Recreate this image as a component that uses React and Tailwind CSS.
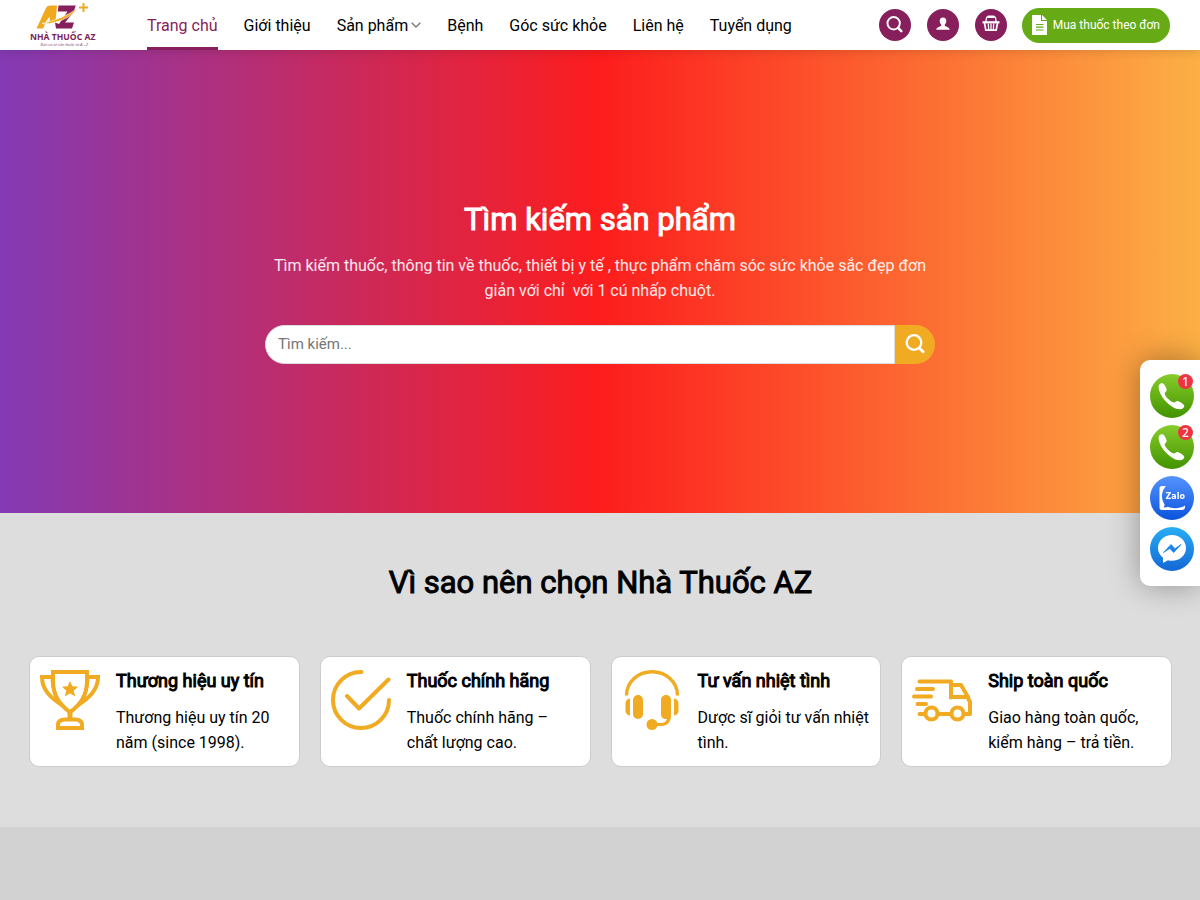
import React, { useState } from "react";

const menu = [
  { label: "Trang chủ", active: true },
  { label: "Giới thiệu" },
  { label: "Sản phẩm", dropdown: true },
  { label: "Bệnh" },
  { label: "Góc sức khỏe" },
  { label: "Liên hệ" },
  { label: "Tuyển dụng" },
];

const Logo = () => (
  <svg width="67" height="46" viewBox="0 0 70 48" role="img" aria-label="Nhà Thuốc AZ">
    <g transform="scale(1.045)">
      <path d="M6.500 26.500 16 6Q17 3.500 19.500 3.500H27L25.500 20h-6l.2-5.500-3.700 5-3 7z" fill="#f0a91f" />
      <path d="M28.500 3.500h17.200l-2 6.500L35 20.500h9L42 26.500H26l-1-6 4 1.500L37.500 9.500H27.800z" fill="#861f5b" />
      <path d="M12 21.500Q34 16.500 48 6 40 17 24 20.500l-4 1z" fill="#f0a91f" stroke="#fff" strokeWidth=".6" />
      <path d="M53.500 1v9M49 5.500h9" stroke="#f0a91f" strokeWidth="2" />
    </g>
    <text x="0" y="40" fontSize="9" fontWeight="700" fontFamily="Noto Sans, sans-serif" fill="#7d1f56">
      NHÀ THUỐC AZ
    </text>
    <text x="11" y="46" fontSize="4" fontStyle="italic" fontFamily="Liberation Sans, sans-serif" fill="#8d5577">
      Bán và tư vấn thuốc từ A - Z
    </text>
  </svg>
);

const SearchIcon = ({ size }) => (
  <svg width={size} height={size} viewBox="0 0 20 20" fill="none" stroke="currentColor" aria-hidden="true">
    <circle cx="9" cy="8.500" r="7.300" strokeWidth="2.300" />
    <path d="M14.300 14l3.700 3.700" strokeWidth="3" strokeLinecap="round" />
  </svg>
);

const UserIcon = () => (
  <svg width="14" height="14" viewBox="0 0 14 14" fill="currentColor" aria-hidden="true">
    <path d="M7 .5c2.200 0 3.400 1.500 3.300 3.600-.1 1.700-.8 2.900-1.500 3.500v1.200c0 .7 4.900 1.100 4.900 4H.3c0-2.900 4.900-3.300 4.900-4V7.600C4.500 7 3.800 5.800 3.700 4.100 3.600 2 4.800.5 7 .5z" />
  </svg>
);

const BasketIcon = () => (
  <svg width="18" height="18" viewBox="0 0 18 18" fill="none" stroke="currentColor" aria-hidden="true">
    <path d="M3.800 7l.7-4Q4.800 1.700 6 1.700h6q1.200 0 1.500 1.300l.7 4" strokeWidth="1.300" />
    <path d="M6.500 1.700h5" strokeWidth="2.400" strokeLinecap="round" />
    <path d="M.5 7.300h17" strokeWidth="2.200" />
    <path d="M2.500 8l1.300 7.200h10.400L15.500 8" strokeWidth="1.700" />
    <path d="M6.300 8.500l.4 6.500M9 8.500V15M11.700 8.500l-.4 6.500" strokeWidth="1.300" />
  </svg>
);

const FileIcon = () => (
  <svg width="15" height="20" viewBox="0 0 15 20" aria-hidden="true">
    <path d="M0 0h9v6h6v14H0z" fill="#fff" />
    <path d="M10 0l5 5h-5z" fill="#fff" />
    <path d="M4 9.500h7.500M4 12.200h7.500M4 15h7.500" stroke="#66ab16" strokeWidth="1.200" />
  </svg>
);

const TrophyIcon = () => (
  <svg width="60" height="60" viewBox="0 0 60 60" fill="none" stroke="#f0ab22" strokeWidth="4" aria-hidden="true">
    <path d="M13 2h34v9c0 15-8 25-17 31-9-6-17-16-17-31z" />
    <path d="M13 7H2c0 13 9 21 20 28M47 7h11c0 13-9 21-20 28" />
    <path d="M12 7c0 7 1 12 4 19M48 7c0 7-1 12-4 19" strokeWidth="3" />
    <path d="M30 41v8" strokeWidth="5" />
    <path d="M18 58v-3c0-4 3-5.500 7-5.500h10c4 0 7 1.500 7 5.500v3z" />
    <path d="M30 12l2 4.800 5.200.3-4 3.400 1.300 5.100-4.500-2.800-4.500 2.800 1.300-5.100-4-3.400 5.200-.3z" fill="#f0ab22" strokeWidth="1" />
  </svg>
);

const CheckIcon = () => (
  <svg width="60" height="60" viewBox="0 0 60 60" fill="none" stroke="#f0ab22" strokeWidth="4" strokeLinecap="round" strokeLinejoin="round" aria-hidden="true">
    <path d="M30.500 2A28 28 0 1 0 58 30" />
    <path d="M16 26l12 12.500L57.500 9.500" />
  </svg>
);

const HeadsetIcon = () => (
  <svg width="60" height="60" viewBox="0 0 60 60" fill="#f0ab22" aria-hidden="true">
    <path d="M4.500 25.500C4.500 12 16 1.800 30 1.800S55.500 12 55.500 25.500" fill="none" stroke="#f0ab22" strokeWidth="3.400" />
    <path d="M8 28.500v17c-3 0-4.500-3-4.500-5v-7c0-2 1.500-5 4.500-5zM52 28.500v17c3 0 4.500-3 4.500-5v-7c0-2-1.500-5-4.500-5z" />
    <rect x="11" y="25" width="10" height="24" rx="5" />
    <path d="M39 30c0-6.600 10-6.600 10 0v16c0 6-4 10-9 10H30v-3h9c3 0 5-1.500 6-4-3 .5-6-1-6-5z" />
    <circle cx="30" cy="54.500" r="5.500" />
  </svg>
);

const TruckIcon = () => (
  <svg width="60" height="60" viewBox="0 0 60 60" fill="none" stroke="#f0ab22" strokeWidth="4" strokeLinecap="round" strokeLinejoin="round" aria-hidden="true">
    <path d="M7.500 11.500H39v16" />
    <path d="M5 19h16M2 26.500h17M5.500 34H14" />
    <path d="M39 15h10l7 12H39z" />
    <path d="M56 28l2 4v12h-5M38 44H27M12 44H7.500" />
    <circle cx="19.500" cy="43.500" r="6" />
    <circle cx="45.500" cy="43.500" r="6" />
  </svg>
);

const features = [
  { title: "Thương hiệu uy tín", text: "Thương hiệu uy tín 20 năm (since 1998).", Icon: TrophyIcon },
  { title: "Thuốc chính hãng", text: "Thuốc chính hãng – chất lượng cao.", Icon: CheckIcon },
  { title: "Tư vấn nhiệt tình", text: "Dược sĩ giỏi tư vấn nhiệt tình.", Icon: HeadsetIcon },
  { title: "Ship toàn quốc", text: "Giao hàng toàn quốc, kiểm hàng – trả tiền.", Icon: TruckIcon },
];

const PhoneIcon = ({ number }) => (
  <svg width="44" height="44" viewBox="0 0 44 44" aria-hidden="true">
    <defs>
      <linearGradient id={`phone-${number}`} x1="0" y1="0" x2="0" y2="1">
        <stop offset="0" stopColor="#88cc2b" />
        <stop offset="1" stopColor="#419300" />
      </linearGradient>
    </defs>
    <circle cx="22" cy="22" r="22" fill={`url(#phone-${number})`} />
    <path d="M9.300 10.500c1-1 2.300-1.600 3.500-1.200 1.500.6 3.900 5 3.900 6.800 0 1.600-2.300 2.200-2 3.600.7 3 5.300 7.300 8.500 8.600 1.500.6 2.800-1.500 4.400-1.200 1.900.4 6.600 3.300 6.700 4.800.1 1.600-2 3.300-4.500 3.400-8 .2-19.500-11.500-21-20.500-.2-1.700-.2-3.500.5-4.300z" fill="#fff" />
    <circle cx="35.500" cy="7.500" r="7.500" fill="#ef3340" />
    <text x="35.500" y="12" textAnchor="middle" fontSize="12" fontWeight="500" fontFamily="Noto Sans, sans-serif" fill="#fff">
      {number}
    </text>
  </svg>
);

const ZaloIcon = () => (
  <svg width="44" height="44" viewBox="0 0 44 44" aria-hidden="true">
    <defs>
      <linearGradient id="zalo" x1="0" y1="0" x2="0" y2="1">
        <stop offset="0" stopColor="#5593ff" />
        <stop offset="1" stopColor="#0a53dd" />
      </linearGradient>
    </defs>
    <circle cx="22" cy="22" r="22" fill="url(#zalo)" />
    <path d="M16 10h-4q-2.500 0-2.500 2.500v19q0 2.500 2.500 2.500h20q3 0 3-3v-1.500c-5 3-12 3.500-17 1.200-2 .8-3.500.8-4.500.5 1-1 1.200-2 1-3C10.500 22 11.500 15 16 10z" fill="#fff" />
    <text x="15.500" y="23" fontSize="8" fontWeight="700" fontFamily="DejaVu Sans, sans-serif" fill="#fff">
      Zalo
    </text>
  </svg>
);

const MessengerIcon = () => (
  <svg width="44" height="44" viewBox="0 0 44 44" aria-hidden="true">
    <defs>
      <linearGradient id="messenger" x1="0" y1="0" x2="0" y2="1">
        <stop offset="0" stopColor="#28adf5" />
        <stop offset="1" stopColor="#1467d6" />
      </linearGradient>
    </defs>
    <circle cx="22" cy="22" r="22" fill="url(#messenger)" />
    <path d="M22 8C14 8 8 13.800 8 21c0 4 2 7.500 5 9.800V36l5-2.700c1.300.4 2.600.5 4 .5 8 0 14-5.600 14-12.800S30 8 22 8z" fill="#fff" />
    <path d="M13.500 25.500l7.500-8 4 4.200 6-4.200-7.300 8-3.900-4.100z" fill="#1c83e4" stroke="#1c83e4" strokeWidth=".8" />
  </svg>
);

const contacts = [
  { label: "Gọi số 1", icon: <PhoneIcon number={1} /> },
  { label: "Gọi số 2", icon: <PhoneIcon number={2} /> },
  { label: "Zalo", icon: <ZaloIcon /> },
  { label: "Messenger", icon: <MessengerIcon /> },
];

const Header = () => (
  <header className="sticky top-0 z-10 flex h-[50px] items-center bg-white px-[30px] shadow-[1px_1px_10px_rgba(0,0,0,0.15)]">
    <a href="#" className="mr-[50px] shrink-0">
      <Logo />
    </a>
    <nav className="flex h-full grow gap-[26px]">
      {menu.map((item) => (
        <a
          key={item.label}
          href="#"
          className={
            item.active
              ? "flex items-center border-b-3 border-[#861f5b] pt-[5px] text-[#861f5b]"
              : "flex items-center gap-[3px] pt-[2px] text-black"
          }
        >
          {item.label}
          {item.dropdown && (
            <svg width="10" height="8" viewBox="0 0 10 8" fill="none" stroke="#777" strokeWidth="1.300" aria-hidden="true">
              <path d="M.7.7L5 5 9.300.7" />
            </svg>
          )}
        </a>
      ))}
    </nav>
    <div className="flex items-center gap-[15px]">
      <div className="flex gap-4">
        <button aria-label="Tìm kiếm" className="flex size-8 items-center justify-center rounded-full bg-[#861f5b] pb-[2px] text-white">
          <SearchIcon size={17} />
        </button>
        <button aria-label="Tài khoản" className="flex size-8 items-center justify-center rounded-full bg-[#861f5b] pb-[2px] text-white">
          <UserIcon />
        </button>
        <button aria-label="Giỏ hàng" className="flex size-8 items-center justify-center rounded-full bg-[#861f5b] pb-[2px] text-white">
          <BasketIcon />
        </button>
      </div>
      <a href="#" className="flex h-[35px] items-center gap-[6px] rounded-full bg-[#66ab16] px-[10px] text-xs whitespace-nowrap text-white">
        <FileIcon />
        Mua thuốc theo đơn
      </a>
    </div>
  </header>
);

const App = () => {
  const [keyword, setKeyword] = useState("");

  return (
    <div className="min-h-screen bg-[#d2d2d2] font-[Roboto,sans-serif] text-base text-black">
      <Header />

      <section className="bg-linear-to-r from-[#833ab4] via-[#fd1d1d] to-[#fcb045] px-4 pt-[150px] pb-[149px] text-center text-white [--tw-gradient-position:to_right]">
        <div className="mx-auto max-w-[670px]">
          <h1 className="text-[31px] leading-10 [-webkit-text-stroke:1px]">Tìm kiếm sản phẩm</h1>
          <p className="mt-[13px] leading-[25px] text-white/90">
            Tìm kiếm thuốc, thông tin về thuốc, thiết bị y tế , thực phẩm chăm sóc sức khỏe sắc đẹp đơn giản với chỉ &nbsp;với 1 cú nhấp chuột.
          </p>
          <form className="mt-[22px] flex h-[39px]" onSubmit={(e) => e.preventDefault()}>
            <input
              type="search"
              aria-label="Tìm kiếm sản phẩm"
              placeholder="Tìm kiếm..."
              value={keyword}
              onChange={(e) => setKeyword(e.target.value)}
              className="min-w-0 grow rounded-l-full border border-[#ddd] bg-white px-3 text-[15px] text-[#333] outline-none placeholder:text-[#757575]"
            />
            <button aria-label="Gửi" className="flex w-10 items-center justify-center rounded-r-full bg-[#f0ab22] pb-[2px] text-white">
              <SearchIcon size={20} />
            </button>
          </form>
        </div>
      </section>

      <section className="bg-[#ddd] pt-[50px] pr-[28px] pb-[60px] pl-[29px]">
        <h2 className="text-center text-[31px] leading-10 [-webkit-text-stroke:1px]">Vì sao nên chọn Nhà Thuốc AZ</h2>
        <div className="mt-[53px] grid grid-cols-4 gap-5">
          {features.map(({ title, text, Icon }) => (
            <div key={title} className="flex gap-4 rounded-[10px] border border-[#ccc] bg-white px-[10px] py-[11px]">
              <div className="shrink-0 pt-[2px]">
                <Icon />
              </div>
              <div>
                <h3 className="text-lg leading-[26px] [-webkit-text-stroke:1px]">{title}</h3>
                <p className="mt-[11px] leading-[25px]">{text}</p>
              </div>
            </div>
          ))}
        </div>
      </section>

      <aside className="fixed top-[360px] right-0 z-20 flex flex-col gap-[7px] rounded-l-[10px] bg-white pt-[14px] pr-[6px] pb-[15px] pl-[10px] shadow-[0_0_30px_rgba(0,0,0,0.35)]">
        {contacts.map((item) => (
          <a key={item.label} href="#" aria-label={item.label}>
            <span className="block size-11">{item.icon}</span>
          </a>
        ))}
      </aside>
    </div>
  );
};

export default App;
